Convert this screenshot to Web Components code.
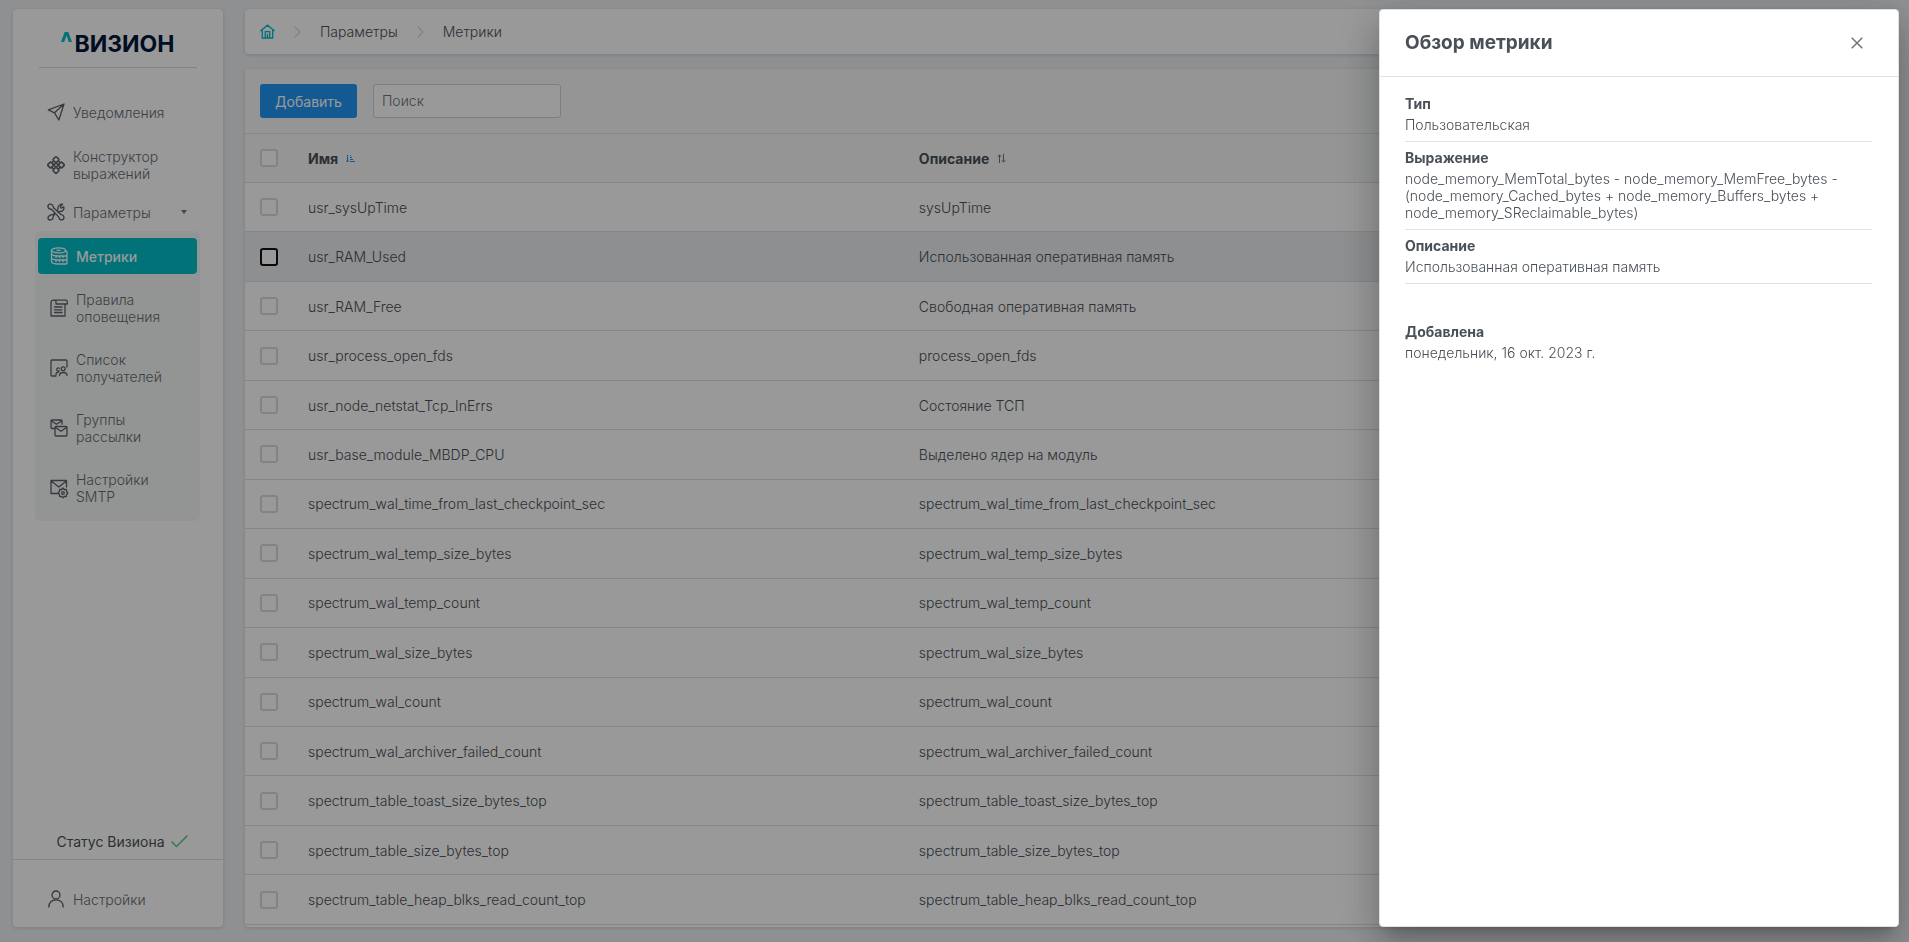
<!DOCTYPE html>
<html lang="ru">
<head>
<meta charset="utf-8">
<title>Визион — Метрики</title>
<style>
html, body { height: 100%; margin: 0; }
body {
  --text: #495057; --muted: #6c757d; --line: #dee2e6; --teal: #00bec8; --blue: #2196f3;
  --card-shadow: 0 1px 4px rgba(0,0,0,.14);
  font: 300 14px/17px Inter, "Noto Sans", sans-serif;
  color: var(--text); background: #eff1f4;
}
</style>
</head>
<body>
<app-shell>
  <side-menu slot="menu"></side-menu>
  <bread-crumbs></bread-crumbs>
  <metrics-table></metrics-table>
  <metric-drawer slot="overlay" heading="Обзор метрики">
    <detail-field label="Тип">Пользовательская</detail-field>
    <detail-field label="Выражение">node_memory_MemTotal_bytes - node_memory_MemFree_bytes - (node_memory_Cached_bytes + node_memory_Buffers_bytes + node_memory_SReclaimable_bytes)</detail-field>
    <detail-field label="Описание">Использованная оперативная память</detail-field>
    <detail-field class="last" label="Добавлена">понедельник, 16 окт. 2023 г.</detail-field>
  </metric-drawer>
</app-shell>

<script>
const define = (name, render) => customElements.define(name, class extends HTMLElement {
  constructor() { super(); this.attachShadow({ mode: 'open' }); }
  connectedCallback() { this.shadowRoot.innerHTML = '<style>*{box-sizing:border-box}</style>' + render(this); }
});

const icons = {
  send: '<path d="M17 1 1.300 6.800l6.200 3L11.800 17z M17 1 7.500 9.800"/>',
  nodes: '<g stroke-width="1.600"><rect x="6.700" y="1.300" width="4.600" height="4.600" rx=".900" transform="rotate(45 9 3.600)"/><rect x="6.700" y="12.100" width="4.600" height="4.600" rx=".900" transform="rotate(45 9 14.400)"/><rect x="1.300" y="6.700" width="4.600" height="4.600" rx=".900" transform="rotate(45 3.600 9)"/><rect x="12.100" y="6.700" width="4.600" height="4.600" rx=".900" transform="rotate(45 14.400 9)"/><path d="M5.400 6.200 6.200 5.400M11.800 5.400l.8.8M5.400 11.800l.8.8M11.800 12.600l.8-.8M9 6.700 11.300 9 9 11.300 6.700 9z"/></g>',
  tools: '<path d="M2.300 1.200 1 2.500c-.3 1.700.6 3.200 2.300 3.600l1.500.4 7 7.600c.2 1.600 1.500 2.800 3 2.800s2.200-1.200 2.200-2.400-1.200-2.700-2.800-2.800L6.600 4.800l-.4-1.500C5.800 1.700 4 .800 2.300 1.200z"/><path d="M10.700 7.300 11 4.500c.4-2 2.300-3.700 4.500-3.300l-2.300 2.500 1 1.500 2.600-1.400c.8 2.500-1.200 4.600-3.200 4.700l-2.500.3M7.500 10.500l-2 1.200c-2 0-4.500 1.300-4.500 3.300 0 1.200 1 2 2.200 2 1.900 0 3-2 3.100-4l1.300-1.500"/>',
  metric: '<ellipse cx="8.500" cy="3.400" rx="7" ry="2.500"/><path d="M7 3.400h3M1.500 3.400v11.100c0 1.700 3 2.500 7 2.500H16a1 1 0 0 0 1-1V4.500l-1.500-1M1.500 7.300c1.500 1.400 4 1.700 7 1.700H17M1.500 11.500c1.500 1.300 4 1.500 7 1.500H17M6 9v1.500M9.500 9v1.500M13 9v1.500M6 13v1.500M9.500 13v1.500M13 13v1.500"/>',
  rules: '<path d="M3.500 1.200H16a1.500 1.500 0 0 1 1.300 1.600V5H6V2.800C6 1.800 5 1 3.600 1.200 2 1.200 1 2 1 3.500V17h14V5M4.500 8h7.500M4.500 10.800h7.500M4.500 13.500h7.500"/>',
  users: '<path d="M6 17H2a1 1 0 0 1-1-1V2a1 1 0 0 1 1-1h14a1 1 0 0 1 1 1v6M6 15.500c0-1.500 1-2.300 2.500-2.300M9.300 9.300a1.600 1.600 0 1 0 0 2.400M9.500 16.500c0-2.200 1.600-3 3.700-3s3.800.8 3.800 3"/><circle cx="13.200" cy="9.700" r="1.900"/>',
  mails: '<path d="M4 9.500H2a1 1 0 0 1-1-1V2a1 1 0 0 1 1-1h9a1 1 0 0 1 1 1v3M1.500 2l5 3.200 5-3.200M6 7.500h10a1 1 0 0 1 1 1V16a1 1 0 0 1-1 1H6a1 1 0 0 1-1-1V8.500a1 1 0 0 1 1-1zM5.500 8.500l5.500 3.700 5.500-3.700"/>',
  smtp: '<path d="M7.500 14.500H1V1.500h15.500V8M1.200 2l7.600 6 7.600-6"/><path d="m13 9 1.300 1.500 2-.1.300 2 1.200 1.600-1.200 1.500-.3 2-2-.1L13 18.700l-1.300-1.300-2 .1-.3-2L8.200 14l1.200-1.600.3-2 2 .1z"/><circle cx="13" cy="14" r="1.300"/>',
  user: '<circle cx="9" cy="5" r="4"/><path d="M1.800 17c0-4.600 3-7.200 7.200-7.200s7.200 2.600 7.200 7.200"/>'
};
const icon = n => `<svg width="18" height="18" viewBox="0 0 18 18" fill="none" stroke="currentColor" stroke-width="1.300" stroke-linejoin="round" stroke-linecap="round" overflow="visible" aria-hidden="true">${icons[n]}</svg>`;

define('app-shell', () => `<style>
  :host { display: flex; gap: 22px; height: 100vh; min-height: 700px; padding: 9px 13px 15px; box-sizing: border-box; }
  main { flex: 1; min-width: 0; display: flex; flex-direction: column; gap: 15px; }
  ::slotted(side-menu) { flex: none; width: 210px; }
  .mask { position: fixed; inset: 0; background: rgba(0,0,0,.4); display: flex; justify-content: flex-end; padding: 9px 10px 15px; }
</style>
<slot name="menu"></slot><main><slot></slot></main>
<div class="mask"><slot name="overlay"></slot></div>`);

define('menu-item', el => `<style>
  :host { display: block; }
  a { display: flex; align-items: center; gap: 8px; padding: var(--pad, 16px) 10px var(--pad, 16px) 8px; color: #646c74; text-decoration: none; border-radius: 4px; }
  svg { flex: none; color: #596168; }
  span { flex: 1; }
  :host([sub]) a { min-height: 60px; padding: 0 50px 0 12px; }
  :host([active]) { margin-bottom: 4px; }
  :host([active]) a { min-height: 36px; background: var(--teal); color: #fff; font-weight: 500; }
  :host([active]) svg { color: #fff; }
  i { border: 3px solid transparent; border-top: 4px solid var(--muted); border-bottom: 0; }
</style>
<a href="#">${icon(el.getAttribute('icon'))}<span><slot></slot></span>${el.hasAttribute('expand') ? '<i></i>' : ''}</a>`);

define('side-menu', () => `<style>
  :host { display: flex; flex-direction: column; background: #fff; border-radius: 4px; box-shadow: var(--card-shadow); }
  .logo { display: flex; justify-content: center; gap: 2px; margin: 0 26px 19px; height: 59px; padding: 21px 0 0; border-bottom: 1px solid #d5d7da; color: #00183a; font-weight: 700; font-size: 23px; line-height: 28px; }
  .logo svg { margin-top: 2px; }
  nav { flex: 1; margin: 0 26px; }
  .c { --pad: 11px; } .p { --pad: 10px; }
  .sub { margin: 0 -3px 0 -4px; padding: 7px 3px 3px; background: #f4f8f6; border-radius: 6px; }
  .status { display: flex; align-items: center; justify-content: center; gap: 6px; padding: 0 0 9px 8px; border-bottom: 1px solid var(--line); font-weight: 400; }
  footer { padding: 14px 26px 3px; }
</style>
<div class="logo"><svg width="11" height="11" viewBox="0 0 11 11" aria-hidden="true"><path d="M0 10 3.700 0h3.600L11 10H7.800L5.500 3.500 3.200 10z" fill="#00bec8"/></svg>ВИЗИОН</div>
<nav>
  <menu-item icon="send">Уведомления</menu-item>
  <menu-item class="c" icon="nodes">Конструктор выражений</menu-item>
  <menu-item class="p" icon="tools" expand>Параметры</menu-item>
  <div class="sub">
    <menu-item sub active icon="metric">Метрики</menu-item>
    <menu-item sub icon="rules">Правила оповещения</menu-item>
    <menu-item sub icon="users">Список получателей</menu-item>
    <menu-item sub icon="mails">Группы рассылки</menu-item>
    <menu-item sub icon="smtp">Настройки SMTP</menu-item>
  </div>
</nav>
<div class="status">Статус Визиона <svg width="17" height="17" viewBox="0 0 17 17" fill="none" stroke="#5dc98a" stroke-width="1.500" aria-hidden="true"><path d="m.5 8.500 5 5L16.500 2.500"/></svg></div>
<footer><menu-item icon="user">Настройки</menu-item></footer>`);

const chevron = '<svg width="7" height="12" viewBox="0 0 7 12" fill="none" stroke="#ced4da" stroke-width="1.200" aria-hidden="true"><path d="m.7.700 5.300 5.300-5.300 5.300"/></svg>';
define('bread-crumbs', () => `<style>
  :host { display: block; flex: none; background: #fff; border-radius: 4px; box-shadow: var(--card-shadow); }
  nav { display: flex; align-items: center; gap: 19px; height: 45px; padding: 0 15px; }
  a { color: inherit; text-decoration: none; display: flex; }
</style>
<nav aria-label="Путь"><a href="#" aria-label="Главная"><svg width="15" height="15" viewBox="0 0 15 15" fill="none" stroke="#00bec8" stroke-width="1.300"><path d="M.4 7 7.500 1.200 14.600 7M2.300 6v8h10.400V6M5.300 14V7.700h4.400V14M7.500 10v4"/></svg></a>${chevron}<a href="#">Параметры</a>${chevron}<a href="#">Метрики</a></nav>`);

const rows = [
  ['usr_sysUpTime', 'sysUpTime'],
  ['usr_RAM_Used', 'Использованная оперативная память'],
  ['usr_RAM_Free', 'Свободная оперативная память'],
  ['usr_process_open_fds', 'process_open_fds'],
  ['usr_node_netstat_Tcp_InErrs', 'Состояние ТСП'],
  ['usr_base_module_MBDP_CPU', 'Выделено ядер на модуль'],
  ...['wal_time_from_last_checkpoint_sec', 'wal_temp_size_bytes', 'wal_temp_count', 'wal_size_bytes', 'wal_count',
    'wal_archiver_failed_count', 'table_toast_size_bytes_top', 'table_size_bytes_top', 'table_heap_blks_read_count_top']
    .map(n => ['spectrum_' + n, 'spectrum_' + n])
];
define('metrics-table', () => `<style>
  :host { flex: 1; min-height: 0; display: flex; flex-direction: column; background: #fff; border-radius: 4px; box-shadow: var(--card-shadow); padding-bottom: 2px; }
  .bar { display: flex; gap: 16px; padding: 15px; background: #f8f9fa; border-bottom: 1px solid var(--line); border-radius: 4px 4px 0 0; }
  button { font: inherit; cursor: pointer; }
  .add { width: 97px; height: 34px; border: 0; border-radius: 3px; background: var(--blue); color: #fff; font-weight: 400; padding: 0; }
  .find { width: 188px; height: 34px; border: 1px solid #ced4da; border-radius: 3px; padding: 0 8px 1px; font: inherit; color: inherit; background: #fff; }
  .find::placeholder { color: var(--muted); opacity: 1; }
  .wrap { flex: 1; min-height: 0; }
  table { width: 100%; height: 100%; border-collapse: separate; border-spacing: 0; table-layout: fixed; }
  .c1 { width: 48px; } .c2 { width: 37%; }
  th, td { padding: 0 15px; text-align: left; border-bottom: 1px solid var(--line); vertical-align: middle; }
  th { height: 49px; background: #f8f9fa; font-weight: 700; }
  th button { display: flex; align-items: center; gap: 8px; border: 0; background: none; padding: 0; color: inherit; }
  tr.on td { background: #eceef1; }
  input[type=checkbox] { appearance: none; display: block; width: 18px; height: 18px; margin: 0; border: 2px solid #d8dce0; border-radius: 3px; background: #fff; }
  .on input[type=checkbox] { border-color: #111; }
</style>
<div class="bar"><button class="add">Добавить</button><input class="find" type="text" placeholder="Поиск" aria-label="Поиск"></div>
<div class="wrap"><table><colgroup><col class="c1"><col class="c2"><col></colgroup>
<thead><tr><th><input type="checkbox" aria-label="Выбрать все"></th>
<th><button>Имя <svg width="9" height="9" viewBox="0 0 9 9" fill="none" stroke="#2196f3" aria-hidden="true"><path d="M1.500 1v7M0 6.500 1.500 8 3 6.500M4 1.500h1M4 3.500h2M4 5.500h3M4 7.500h5"/></svg></button></th>
<th><button>Описание <svg width="9" height="9" viewBox="0 0 9 9" fill="none" stroke="#6c757d" aria-hidden="true"><path d="M2.500 9V1M.5 2.800 2.500 1l2 1.800M6.500 0v8M4.800 6.300 6.500 8l2-1.700"/></svg></button></th></tr></thead>
<tbody>${rows.map(([n, d], i) => `<tr${i === 1 ? ' class="on"' : ''}><td><input type="checkbox" aria-label="${n}"></td><td>${n}</td><td>${d}</td></tr>`).join('')}</tbody></table></div>`);

define('metric-drawer', el => `<style>
  :host { display: flex; flex-direction: column; width: 520px; background: #fff; border: 1px solid var(--line); border-radius: 4px; box-sizing: border-box;
    box-shadow: 0 11px 15px -7px rgba(0,0,0,.2), 0 24px 38px 3px rgba(0,0,0,.14), 0 9px 46px 8px rgba(0,0,0,.12); }
  header { display: flex; align-items: center; justify-content: space-between; height: 67px; padding: 0 26px 0 25px; border-bottom: 1px solid var(--line); }
  h2 { margin: 0; font-size: 19px; line-height: 24px; font-weight: 700; }
  button { display: flex; align-items: center; justify-content: center; width: 30px; height: 30px; border: 0; padding: 0; background: none; color: var(--muted); }
  .body { padding: 11px 26px 0 25px; }
</style>
<header><h2>${el.getAttribute('heading')}</h2><button aria-label="Закрыть"><svg width="12" height="12" viewBox="0 0 12 12" fill="none" stroke="currentColor" stroke-width="1.500"><path d="m.7.700 10.600 10.600M11.300.700.7 11.300"/></svg></button></header>
<div class="body"><slot></slot></div>`);

define('detail-field', el => `<style>
  :host { display: block; padding: 7px 0 8px; border-bottom: 1px solid var(--line); }
  :host(.last) { margin-top: 32px; border: 0; }
  b { display: block; margin-bottom: 4px; font-weight: 700; }
</style>
<b>${el.getAttribute('label')}</b><slot></slot>`);
</script>
</body>
</html>
